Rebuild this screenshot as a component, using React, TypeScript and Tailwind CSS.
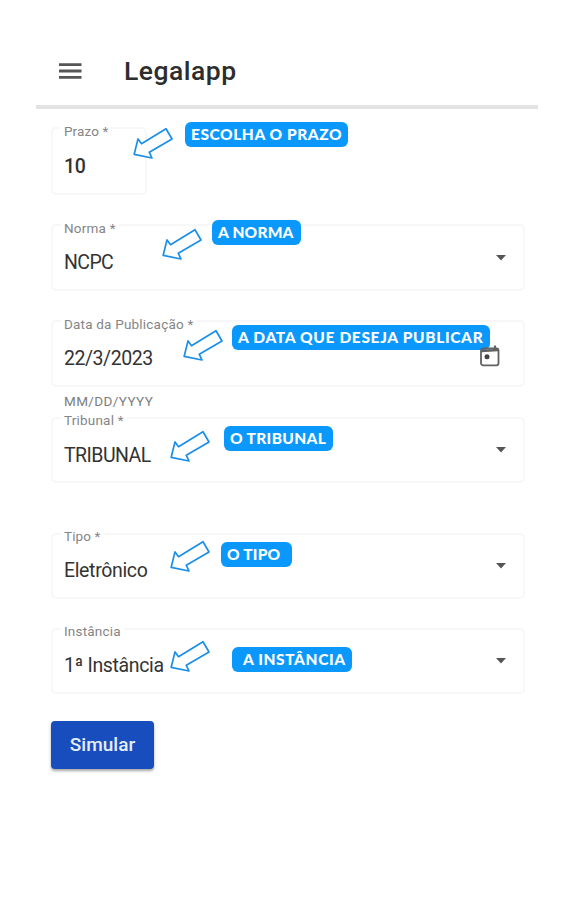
import React from "react";

type FieldProps = {
  label: string;
  labelClass: string;
  value: string;
  valueClass: string;
  hint: string;
  hintClass: string;
  hintTextClass: string;
  arrowClass: string;
  className: string;
  icon?: "select" | "date";
};

const FIELDS: FieldProps[] = [
  {
    label: "Prazo *",
    labelClass: "-top-[5px] tracking-[0.1px]",
    value: "10",
    valueClass: "tracking-[-0.4px] mt-[2px] font-medium",
    hint: "ESCOLHA O PRAZO",
    hintClass: "left-[134px] -top-[5px] w-[163px]",
    hintTextClass: "left-[6px] tracking-[0.56px]",
    arrowClass: "left-[80px] -top-[2px]",
    className: "mt-[18px] h-[68px] w-[96px]"
  },
  {
    label: "Norma *",
    labelClass: "-top-[5px] tracking-[0.2px]",
    value: "NCPC",
    valueClass: "tracking-[-0.6px] mt-px",
    hint: "A NORMA",
    hintClass: "left-[161px] -top-1 w-[89px]",
    hintTextClass: "left-[6px] tracking-[0.2px]",
    arrowClass: "left-[109px] top-[2px]",
    className: "mt-[29px] h-[67px]",
    icon: "select"
  },
  {
    label: "Data da Publicação *",
    labelClass: "-top-[5px] tracking-[0.2px]",
    value: "22/3/2023",
    valueClass: "tracking-[-0.45px] mt-px",
    hint: "A DATA QUE DESEJA PUBLICAR",
    hintClass: "left-[181px] top-[5px] w-[258px]",
    hintTextClass: "left-[6px] tracking-[0.65px]",
    arrowClass: "left-[130px] top-[7px]",
    className: "mt-[29px] h-[67px]",
    icon: "date"
  },
  {
    label: "Tribunal *",
    labelClass: "-top-[6px] tracking-[0.2px]",
    value: "TRIBUNAL",
    valueClass: "tracking-[-0.55px] mt-px",
    hint: "O TRIBUNAL",
    hintClass: "left-[173px] top-[9px] w-[109px]",
    hintTextClass: "left-[6px] tracking-[0.35px]",
    arrowClass: "left-[117px] top-[11px]",
    className: "mt-[8px] h-[66px]",
    icon: "select"
  },
  {
    label: "Tipo *",
    labelClass: "-top-[6px] tracking-[0.1px]",
    value: "Eletrônico",
    valueClass: "tracking-[-0.35px] -mt-px",
    hint: "O TIPO",
    hintClass: "left-[170px] top-[9px] w-[71px]",
    hintTextClass: "left-[6px] tracking-[0.2px]",
    arrowClass: "left-[117px] top-[5px]",
    className: "mt-[50px] h-[66px]",
    icon: "select"
  },
  {
    label: "Instância",
    labelClass: "-top-[6px] tracking-[0.2px]",
    value: "1ª Instância",
    valueClass: "tracking-[-0.35px]",
    hint: "A INSTÂNCIA",
    hintClass: "left-[181px] top-[19px] w-[120px]",
    hintTextClass: "left-[11px] tracking-[0.6px]",
    arrowClass: "left-[117px] top-[10px]",
    className: "mt-[29px] h-[66px]",
    icon: "select"
  }
];

function HintArrow({ className }: { className: string }) {
  return (
    <svg width="40" height="33" viewBox="0 0 40 33" fill="#fff" stroke="#1b8fe8" strokeWidth="1.7" strokeLinejoin="round" className={`absolute z-10 ${className}`}>
      <path d="M1.2 27.3 5 11.9 8.5 16.7 33 1.7 39 12 16.3 25.3 19 31Z" />
    </svg>
  );
}

function CalendarIcon() {
  return (
    <svg width="22" height="23" viewBox="0 0 22 23" fill="none" stroke="#626262" strokeWidth="1.8">
      <rect x="2" y="3.5" width="17.5" height="16.8" rx="2" />
      <path d="M2.5 6 19 5" strokeWidth="2.4" />
      <path d="M16 .5v3.5" strokeWidth="2.2" />
      <circle cx="8" cy="11.8" r="2.5" fill="#444" stroke="none" />
    </svg>
  );
}

function Field({ label, labelClass, value, valueClass, hint, hintClass, hintTextClass, arrowClass, className, icon }: FieldProps) {
  return (
    <div className={`relative flex items-center justify-between rounded-[5px] border-2 border-[#f7f7f7] pl-[11px] pt-[10px] ${className}`}>
      <span className={`absolute left-[8px] bg-white px-[3px] text-[13.5px] leading-[14px] whitespace-nowrap text-[#858585] ${labelClass}`}>{label}</span>
      <span className={`text-[19.5px] leading-[24px] whitespace-nowrap text-[#333] ${valueClass}`}>{value}</span>
      {icon === "select" && (
        <svg width="10" height="6" viewBox="0 0 10 6" className="mr-[17px] -mt-[10px]" fill="#555">
          <path d="M0 0h10L5 5.5Z" />
        </svg>
      )}
      {icon === "date" && (
        <div className="relative z-20 mr-[22px] -mt-[5px]">
          <CalendarIcon />
        </div>
      )}
      <HintArrow className={arrowClass} />
      <div className={`absolute z-10 -ml-[2px] -mt-[2px] h-[25px] rounded-[6px] bg-[#0a98fd] ${hintClass}`}>
        <span className={`absolute top-0 font-[Lato,sans-serif] text-[15.5px] leading-[25px] font-black whitespace-nowrap text-white ${hintTextClass}`}>{hint}</span>
      </div>
    </div>
  );
}

export default function App() {
  return (
    <div className="h-[900px] w-[563px] overflow-hidden bg-white pl-9 font-[Roboto,sans-serif]">
      <header className="flex h-[109px] w-[502px] items-center border-b-4 border-[#e3e3e3] pt-[36px] pl-[23px]">
        <svg width="23" height="16" viewBox="0 0 23 16" stroke="#555" strokeWidth="2.8">
          <path d="M0 1.6h22.5M0 8h22.5M0 14.4h22.5" />
        </svg>
        <h1 className="ml-[42px] text-[26.5px] leading-[32px] font-medium tracking-[0.5px] text-[#2d2d2d]">Legalapp</h1>
      </header>

      <main className="ml-[15px] w-[474px]">
        {FIELDS.map((field) => (
          <React.Fragment key={field.label}>
            <Field {...field} />
            {field.icon === "date" && (
              <p className="mt-[6px] ml-[13px] h-4 text-[13.5px] leading-[16px] tracking-[0.4px] text-[#7d7d7d]">MM/DD/YYYY</p>
            )}
          </React.Fragment>
        ))}
        <button type="button" className="mt-[27px] flex h-[48px] w-[103px] items-center justify-center rounded-[4px] bg-[#174dbd] text-[19px] font-medium text-[#e6ecfa] shadow-[0_2px_3px_rgba(0,0,0,0.35)]">
          Simular
        </button>
      </main>
    </div>
  );
}
